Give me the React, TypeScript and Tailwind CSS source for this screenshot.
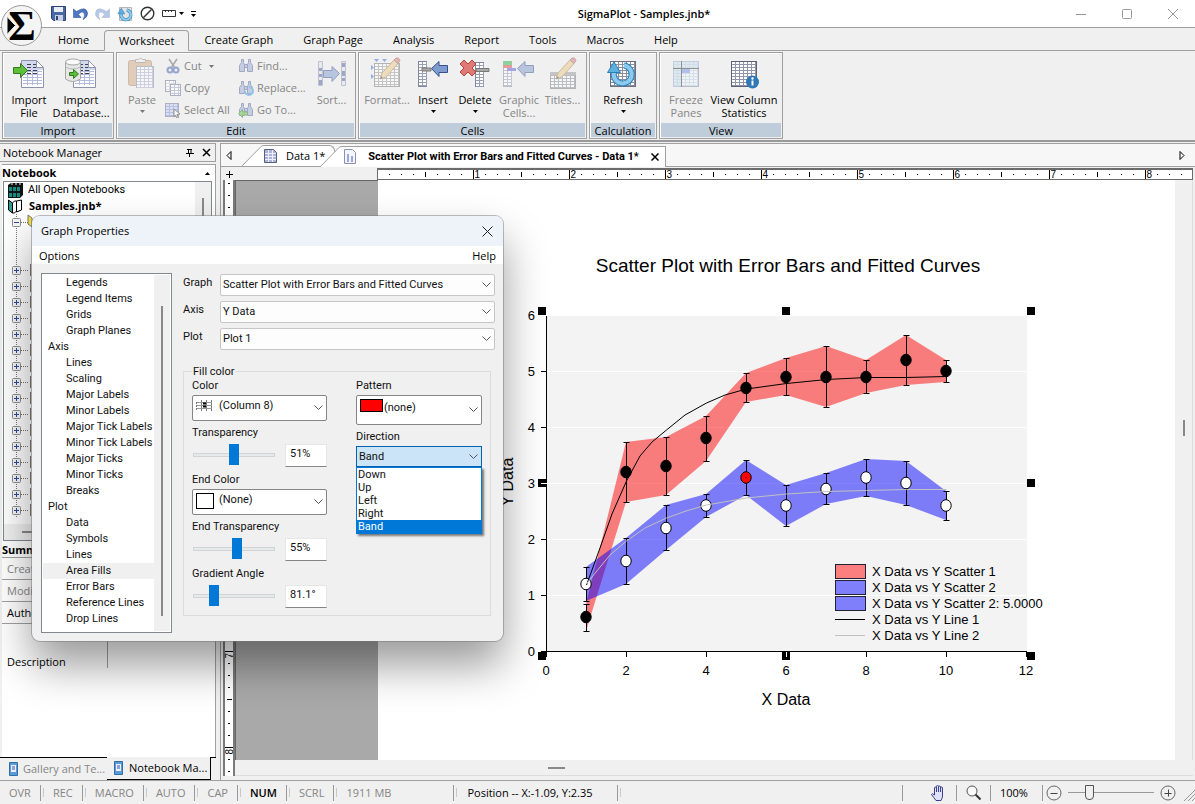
import { useState, type ReactNode } from 'react';

const UI = "font-['Open_Sans','Noto_Sans',sans-serif]";
const COMPACT = "font-['Roboto','Open_Sans',sans-serif]";

/* ---------- icons ---------- */

function Sheet({ x = 0, y = 0, w = 24, h = 26, fill = '#fff', line = '#a9b0d0', edge = '#8287a5', head = '' }) {
  const rows: number[] = [];
  const cols: number[] = [];
  for (let i = 3; i < h; i += 3) rows.push(i);
  for (let i = 4; i < w; i += 4) cols.push(i);
  return (
    <g>
      <rect x={x + 0.5} y={y + 0.5} width={w - 1} height={h - 1} fill={fill} stroke={edge} />
      {head && <rect x={x + 1} y={y + 1} width={w - 2} height={5} fill={head} />}
      {rows.map((r) => <path key={'r' + r} d={`M${x + 1} ${y + r + 0.5}h${w - 2}`} stroke={line} />)}
      {cols.map((c) => <path key={'c' + c} d={`M${x + c + 0.5} ${y + 1}v${h - 2}`} stroke={line} />)}
    </g>
  );
}

function Page() {
  return (
    <g>
      <path d="M9.500 3.500h15l7 7v20h-22z" fill="#d3d9ec" stroke="#8e93ad" />
      <path d="M10 13h21v17H10z" fill="#fff" />
      <path d="M24.500 3.500l7 7h-7z" fill="#fff" stroke="#8e93ad" />
      <path d="M11 14.500h19M11 17.500h19M11 20.500h19M11 23.500h19M11 26.500h19M15.500 13v15M20.500 13v15M25.500 13v15" stroke="#b3bbdc" />
      <path d="M15 7.500h4M21 7.500h3M15 10.500h4M21 10.500h3M15 13.500h4M21 13.500h4M15 16.500h4M21 16.500h4" stroke="#3d4258" />
    </g>
  );
}

function BlueArrow({ x = 0, y = 0, flip = false }) {
  return (
    <path
      transform={`translate(${x} ${y})${flip ? ' scale(-1 1)' : ''}`}
      d="M0.500 7.500L8 0.500v4h8.500v7H8v4z" fill="#7f9bd0" stroke="#33508f"
    />
  );
}

function Pencil() {
  return (
    <g>
      <path d="M10 22l2-6L24 3l4 3.500L16 20z" fill="#e9c987" stroke="#a58451" />
      <path d="M24 3l2-2q3-1 4 2.500L28 6.500z" fill="#d77a7a" stroke="#a35a5a" />
      <path d="M10 22l1-3 2 2z" fill="#444" />
    </g>
  );
}

function Circular({ s = 1 }) {
  return (
    <g transform={`scale(${s})`}>
      <path d="M8 14a9 9 0 1 0 10-6.500" fill="none" stroke="#2b7fb8" strokeWidth="6" />
      <path d="M8 14a9 9 0 1 0 10-6.500" fill="none" stroke="#8ccbee" strokeWidth="4" />
      <path d="M1.500 14.500L8 4l6.500 10.500z" fill="#5eaede" stroke="#2b7fb8" />
    </g>
  );
}

function Binoculars() {
  return (
    <g fill="#aab6d8" stroke="#6a7aac">
      <path d="M3.500 1.500h2v3l1 2v7h-5v-6l2-3zM10.500 1.500h2v3l2 3v6h-5v-7l1-2z" />
      <path d="M6.500 6.500h3v3h-3z" />
    </g>
  );
}

function Big({ children, dim }: { children: ReactNode; dim?: boolean }) {
  return <svg width="34" height="34" viewBox="0 0 34 34" aria-hidden="true" className={dim ? 'opacity-50' : ''}>{children}</svg>;
}

function Small({ children }: { children: ReactNode }) {
  return <svg width="16" height="16" viewBox="0 0 16 16" aria-hidden="true" className="opacity-60">{children}</svg>;
}

function Caret({ dim }: { dim?: boolean }) {
  return <svg width="5" height="3" viewBox="0 0 5 3" aria-hidden="true"><path d="M0 0h5L2.500 3z" fill={dim ? '#777' : '#000'} /></svg>;
}

function Chevron() {
  return (
    <svg width="9" height="6" viewBox="0 0 9 6" aria-hidden="true" className="pointer-events-none col-start-1 row-start-1 mr-1 self-center justify-self-end">
      <path d="M0.500 0.500l4 4 4-4" fill="none" stroke="#555" />
    </svg>
  );
}

/* ---------- ribbon ---------- */

type ToolProps = { icon: ReactNode; label: string; sub?: string; w: string; dim?: boolean; menu?: boolean };

function Tool({ icon, label, sub, w, dim, menu }: ToolProps) {
  return (
    <button type="button" className={`flex flex-col items-center pt-[3px] leading-[13px] ${w} ${dim ? 'text-[#858585]' : 'text-black'}`}>
      {icon}
      <span className="mt-[2px] whitespace-nowrap">{label}</span>
      {sub && <span className="whitespace-nowrap">{sub}</span>}
      {menu && <span className="mt-1"><Caret dim={dim} /></span>}
    </button>
  );
}

function MiniTool({ icon, label, menu }: { icon: ReactNode; label: string; menu?: boolean }) {
  return (
    <button type="button" className="flex h-[22px] items-center gap-[3px] whitespace-nowrap text-[#858585]">
      <Small>{icon}</Small>
      <span>{label}</span>
      {menu && <span className="flex pl-1"><Caret dim /></span>}
    </button>
  );
}

function Group({ title, children }: { title: string; children: ReactNode }) {
  return (
    <section className="flex flex-col border border-[#a0a0a0] bg-[#f0f0f0] p-px shadow-[inset_1px_1px_0_#fff]">
      <div className="flex h-[70px] px-[2px]">{children}</div>
      <h2 className="h-[14px] bg-[#bfcddb] text-center leading-[15px]">{title}</h2>
    </section>
  );
}

const ribbonTabs = ['Home', 'Worksheet', 'Create Graph', 'Graph Page', 'Analysis', 'Report', 'Tools', 'Macros', 'Help'];

function Ribbon() {
  return (
    <>
      <nav className="flex h-[23px] items-end border-b border-[#a0a0a0] pl-[43px]">
        {ribbonTabs.map((t) => (
          <button
            key={t}
            type="button"
            className={`h-[21px] border px-[14px] ${t === 'Worksheet' ? '-mb-px rounded-t-sm border-[#a0a0a0] border-b-[#f0f0f0] bg-[#f0f0f0]' : 'border-transparent'}`}
          >
            {t}
          </button>
        ))}
      </nav>
      <div className="flex h-[91px] gap-[2px] border-b-2 border-[#999] px-[2px] py-px">
        <Group title="Import">
          <Tool w="w-[46px]" label="Import" sub="File" icon={<Big><Page /><path d="M1.500 10.500h7v-4l7 7-7 7v-4h-7z" fill="#5cbf3a" stroke="#357a22" /></Big>} />
          <Tool w="w-[58px]" label="Import" sub="Database..." icon={
            <Big>
              <Page />
              <path d="M1.500 5v17q7 5 15 0V5z" fill="#e6e7e6" stroke="#a5a8a5" />
              <ellipse cx="9" cy="5" rx="7.500" ry="3" fill="#fafafa" stroke="#a5a8a5" />
              <path d="M1.500 10q7 4 15 0" fill="none" stroke="#b5b8b5" />
              <path d="M5.500 15.500h4v-3l5 4.500-5 4.500v-3h-4z" fill="#5cbf3a" stroke="#357a22" />
            </Big>
          } />
        </Group>
        <Group title="Edit">
          <Tool w="w-[44px]" label="Paste" dim menu icon={
            <Big dim>
              <rect x="3.500" y="3.500" width="23" height="25" rx="2" fill="#d3aa84" stroke="#a98560" />
              <path d="M10.500 5.500v-3h3l1-1h2l1 1h3v3z" fill="#eee" stroke="#888" />
              <Sheet x={11} y={9} w={18} h={22} />
            </Big>
          } />
          <div className="flex w-[73px] flex-col pt-px pl-px">
            <MiniTool label="Cut" menu icon={<><path d="M4 1l6 9M12 1l-6 9" stroke="#777" strokeWidth="1.500" /><circle cx="5" cy="12" r="2.500" fill="none" stroke="#5b74b8" strokeWidth="2" /><circle cx="11" cy="12" r="2.500" fill="none" stroke="#5b74b8" strokeWidth="2" /></>} />
            <MiniTool label="Copy" icon={<><Sheet x={0} y={0} w={11} h={12} line="#ccc" /><Sheet x={5} y={4} w={11} h={12} /></>} />
            <MiniTool label="Select All" icon={<><Sheet x={0} y={1} w={14} h={14} fill="#cdd6f3" line="#8f9fd6" /><path d="M9 7l6 5-3 .500 1.500 3-1.500.500-1.500-3-1.500 2z" fill="#fff" stroke="#555" /></>} />
          </div>
          <div className="flex w-[76px] flex-col pt-px pl-px">
            <MiniTool label="Find..." icon={<Binoculars />} />
            <MiniTool label="Replace..." icon={<><Binoculars /><path d="M7 11a4 4 0 1 0 4-4" fill="none" stroke="#56a6dd" strokeWidth="2" /></>} />
            <MiniTool label="Go To..." icon={<><Binoculars /><path d="M0.500 11.500l4-4v2.500h5v3h-5v2.500z" fill="#7cc46a" stroke="#458f36" /></>} />
          </div>
          <Tool w="w-[37px]" label="Sort..." dim icon={
            <Big dim>
              <path d="M3.500 4.500h4v24h-4zM26.500 4.500h4v24h-4z" fill="#dfe4f5" stroke="#8f94ac" />
              <path d="M4 11h3v3H4zM4 17h3v3H4zM4 23h3v5H4zM27 6h3v4h-3zM27 14h3v5h-3zM27 21h3v3h-3z" fill="#4d5f9c" />
              <BlueArrow x={25} y={9} flip />
            </Big>
          } />
          <span className="w-[2px]" />
        </Group>
        <Group title="Cells">
          <Tool w="w-[50px]" label="Format..." dim icon={
            <Big dim>
              <Sheet x={4} y={6} w={26} h={24} line="#9a9a9a" edge="#777" />
              <path d="M4 2h5L6.500 5zM12 2h5l-2.500 3zM1 8v5l3-2.500zM1 17v5l3-2.500z" fill="#3c6ad0" />
              <Pencil />
            </Big>
          } />
          <Tool w="w-[42px]" label="Insert" menu icon={
            <Big><Sheet x={2} y={4} w={9} h={26} line="#9aa0b4" /><path d="M6 11h9v3H6z" fill="#aaa" stroke="#777" /><BlueArrow x={15} y={4} /></Big>
          } />
          <Tool w="w-[42px]" label="Delete" menu icon={
            <Big>
              <Sheet x={17} y={5} w={9} h={25} line="#9aa0b4" />
              <path d="M18 11.500h13v3H18z" fill="#aaa" stroke="#777" />
              <path d="M2 7l4-4 4 4 4-4 4 4-4 4 4 4-4 4-4-4-4 4-4-4 4-4z" fill="#e07a74" stroke="#b5413c" />
            </Big>
          } />
          <Tool w="w-[46px]" label="Graphic" sub="Cells..." dim icon={
            <Big dim>
              <Sheet x={1} y={4} w={9} h={26} line="#9aa0b4" />
              <path d="M1 4h9v4H1z" fill="#31b44a" /><path d="M1 8h9v3H1z" fill="#e04a4a" /><path d="M5 11h9v3H5z" fill="#5a5ae0" />
              <BlueArrow x={15} y={4} />
            </Big>
          } />
          <Tool w="w-[41px]" label="Titles..." dim icon={
            <Big dim><Sheet x={4} y={15} w={26} h={17} line="#8a8a9a" edge="#777" /><path d="M4 15h26v3H4z" fill="#999" /><Pencil /></Big>
          } />
        </Group>
        <Group title="Calculation">
          <Tool w="w-[60px]" label="Refresh" menu icon={<Big><Sheet x={4} y={4} w={26} h={26} line="#8a8fa0" edge="#6b7083" /><g transform="translate(0 1)"><Circular /></g></Big>} />
        </Group>
        <Group title="View">
          <Tool w="w-[46px]" label="Freeze" sub="Panes" dim icon={
            <Big dim>
              <Sheet x={4} y={4} w={26} h={26} fill="#f3f8fd" line="#b9cfe2" />
              <path d="M4 4h26v6H4zM4 4h8v26H4z" fill="#a9cbe8" opacity=".5" />
              <path d="M12.500 4v26M4 11.500h26" stroke="#333" /><path d="M13 12h8v4h-8z" fill="#6f8ff0" />
            </Big>
          } />
          <Tool w="w-[70px]" label="View Column" sub="Statistics" icon={
            <Big>
              <Sheet x={4} y={4} w={26} h={26} line="#9095aa" edge="#5d6275" />
              <circle cx="25.500" cy="25" r="6.500" fill="#2f77b5" />
              <circle cx="25.500" cy="21.500" r="1.200" fill="#fff" /><path d="M25.500 23.500v5" stroke="#fff" strokeWidth="2" />
            </Big>
          } />
        </Group>
      </div>
    </>
  );
}

function TitleBar() {
  return (
    <header className="relative flex h-7 shrink-0 items-center border-b border-[#a0a0a0] bg-white pl-[51px]">
      <button type="button" aria-label="Application menu" className="absolute top-1 left-0 z-10">
        <svg width="44" height="44" viewBox="0 0 44 44" aria-hidden="true" className="overflow-visible">
          <circle cx="21.500" cy="21.500" r="20" fill="#f4f4f4" stroke="#999" />
          <text x="22" y="36" textAnchor="middle" fontFamily="Liberation Serif, serif" fontWeight="700" fontSize="42">Σ</text>
          <path d="M7 12.500v18l8.500-9z" stroke="#f4f4f4" />
        </svg>
      </button>
      <div className="flex items-center gap-[7px]">
        <button type="button" aria-label="Save">
          <svg width="15" height="15" viewBox="0 0 15 15"><path d="M.500 .500h14v14h-12l-2-2z" fill="#4a67a6" stroke="#2f4373" /><path d="M3 1h9v5H3z" fill="#e9edf5" /><path d="M4 9h8v6H4z" fill="#c9d1e2" /><path d="M5 10h2v4H5z" fill="#2f4373" /></svg>
        </button>
        <button type="button" aria-label="Undo">
          <svg width="15" height="15" viewBox="0 0 15 15"><path d="M.500 3v8.500H8L5.500 8.500Q9 4.500 11 7q1.500 3-1 6.500 5-2.500 4.500-6.500Q13-.500 3.500 5.500z" fill="#4c78c4" stroke="#2f5597" strokeWidth=".6" /></svg>
        </button>
        <button type="button" aria-label="Redo" className="opacity-40">
          <svg width="15" height="15" viewBox="0 0 15 15"><path transform="translate(15 0) scale(-1 1)" d="M.500 3v8.500H8L5.500 8.500Q9 4.500 11 7q1.500 3-1 6.500 5-2.500 4.500-6.500Q13-.500 3.500 5.500z" fill="#4c78c4" stroke="#2f5597" strokeWidth=".6" /></svg>
        </button>
        <button type="button" aria-label="Refresh">
          <svg width="16" height="16" viewBox="0 0 16 16"><path d="M2.500 1.500h12v13h-12z" fill="#e4e4e4" stroke="#b5b5b5" /><Circular s={0.54} /></svg>
        </button>
        <button type="button" aria-label="Stop">
          <svg width="15" height="15" viewBox="0 0 15 15"><circle cx="7.500" cy="7.500" r="6.300" fill="none" stroke="#333" strokeWidth="1.400" /><path d="M3.500 11.500l8-8" stroke="#333" strokeWidth="1.400" /></svg>
        </button>
        <button type="button" aria-label="Ruler units" className="flex items-center gap-[3px]">
          <svg width="14" height="7" viewBox="0 0 14 7"><path d="M.500 .500h13v6H.500zM3.500 0v2M6.500 0v2M9.500 0v2" fill="none" stroke="#333" /></svg>
          <Caret />
        </button>
        <button type="button" aria-label="Customize">
          <svg width="5" height="6" viewBox="0 0 5 6"><path d="M0 .500h5" stroke="#000" /><path d="M0 3h5L2.500 6z" /></svg>
        </button>
      </div>
      <h1 className="flex-1 pl-4 text-center font-semibold">SigmaPlot - Samples.jnb*</h1>
      <div className="flex gap-9 pr-[17px]">
        <button type="button" aria-label="Minimize"><svg width="10" height="10"><path d="M0 5.500h10" stroke="#999" /></svg></button>
        <button type="button" aria-label="Maximize"><svg width="10" height="10"><rect x=".500" y=".500" width="9" height="9" rx="1" fill="none" stroke="#999" /></svg></button>
        <button type="button" aria-label="Close"><svg width="10" height="10"><path d="M0 0l10 10M10 0L0 10" stroke="#999" /></svg></button>
      </div>
    </header>
  );
}

/* ---------- notebook panel ---------- */

function Node({ open }: { open?: boolean }) {
  return (
    <svg width="32" height="16" viewBox="0 0 32 16" aria-hidden="true" className="block">
      <path d="M11.500 0v16M16 8.500h8" stroke="#777" strokeDasharray="1 1" />
      <rect x="7.500" y="4.500" width="8" height="8" rx="1" fill="#f7f7f7" stroke="#8f8f8f" />
      <path d={open ? 'M9 8.500h5' : 'M9 8.500h5M11.500 6v5'} stroke="#2a4aa0" />
      <path d={open ? 'M23 1l4 3v9l-4-3z' : 'M25.500 2v12'} fill="#f0e040" stroke="#777" />
    </svg>
  );
}

const closedNodes = Array.from({ length: 16 }, (_, i) => i);

function NotebookPanel() {
  return (
    <aside className="flex w-[216px] shrink-0 flex-col">
      <div className="flex h-[19px] items-center border border-l-0 border-[#a0a0a0] pr-1 pl-[3px]">
        <h2 className="flex-1">Notebook Manager</h2>
        <button type="button" aria-label="Pin" className="mr-2"><svg width="8" height="8" viewBox="0 0 8 8"><path d="M2.500 0v4.500M1 .500h5M5 0v5M0 4.500h8M3.500 5v3" stroke="#000" fill="none" /></svg></button>
        <button type="button" aria-label="Close panel"><svg width="9" height="9" viewBox="0 0 9 9"><path d="M1 1l7 7M8 1L1 8" stroke="#000" strokeWidth="1.500" /></svg></button>
      </div>
      <div className="mt-[2px] ml-[2px] flex min-h-0 flex-1 flex-col border border-b-0 border-l-0 border-[#a0a0a0] bg-white">
        <div className="flex h-4 items-center justify-between pr-[5px] font-bold">
          Notebook
          <svg width="5" height="3"><path d="M0 3h5L2.500 0z" /></svg>
        </div>
        <div className="mr-[3px] ml-px flex h-[360px] shrink-0 flex-col border border-[#828790]">
          <div className="flex min-h-0 flex-1">
            <ul className="flex-1">
              <li className="flex h-4 items-center gap-[5px] pl-1">
                <svg width="15" height="15" viewBox="0 0 15 15"><path d="M0 2l3-2h12v12l-3 3H0z" fill="#111" /><path d="M1 4h3v4H1zM5 4h3v4H5zM9 4h3v4H9zM1 10h3v4H1zM5 10h3v4H5zM9 10h3v4H9z" fill="#138a80" /><path d="M3 1h2M7 1h2M11 1h2" stroke="#eee" /></svg>
                <span className={COMPACT}>All Open Notebooks</span>
              </li>
              <li className="flex h-4 items-center gap-[6px] pl-1 font-bold">
                <svg width="15" height="15" viewBox="0 0 15 15"><path d="M.500 1l4 3v10l-4-3z" fill="#2a9d94" stroke="#000" /><path d="M4.500 4l2-2h2v10l-2 2h-2z" fill="#fff" stroke="#000" /><path d="M8.500 2l5-1v10l-5 2z" fill="#fff" stroke="#000" /></svg>
                <span>Samples.jnb*</span>
              </li>
              <li className="h-12 pl-px"><Node open /><svg width="32" height="32" className="block"><path d="M11.500 0v32" stroke="#777" strokeDasharray="1 1" /></svg></li>
              {closedNodes.map((n) => <li key={n} className="h-4 pl-px"><Node /></li>)}
            </ul>
            <div className="w-4 bg-[#f0f0f0] pt-4"><div className="mx-auto h-72 w-[2px] bg-[#888]" /></div>
          </div>
          <div className="flex h-4 shrink-0 items-center bg-[#f0f0f0] pl-[18px]"><div className="h-[2px] w-24 bg-[#888]" /></div>
        </div>
        <div className="mt-[2px] flex h-[15px] items-center border-b border-[#a0a0a0] font-bold">Summary</div>
        <dl>
          <div className="flex h-[22px] items-center border-b border-[#a0a0a0] pl-[5px] text-[#858585]"><dt>Created</dt></div>
          <div className="flex h-[22px] items-center border-b border-[#a0a0a0] pl-[5px] text-[#858585]"><dt>Modified</dt></div>
          <div className="flex h-[22px] items-center border-b border-[#a0a0a0] pl-[5px]"><dt>Author</dt></div>
          <div className="flex h-11 items-end pl-[5px]"><dt className="w-[100px] leading-3">Description</dt><dd className="h-11 border-l border-[#a0a0a0]" /></div>
        </dl>
      </div>
      <div className="flex h-[23px] items-start border-t border-black whitespace-nowrap">
        <button type="button" className="flex h-[22px] w-[107px] items-center gap-[5px] pl-[9px] text-[#858585]">
          <BookIcon />Gallery and Te...
        </button>
        <button type="button" className="-mt-px flex h-[23px] items-center gap-[6px] border border-t-0 border-l-0 border-black bg-[#f0f0f0] pr-[3px] pl-[7px]">
          <BookIcon />Notebook Ma...
        </button>
      </div>
    </aside>
  );
}

function BookIcon() {
  return <svg width="9" height="14" viewBox="0 0 9 14" aria-hidden="true" className="shrink-0"><path d="M.500 .500h8v13h-8z" fill="#5b9bd5" stroke="#2f6fa8" /><path d="M2 3h5v7H2z" fill="#eef" /><path d="M3 5h3M3 7h3" stroke="#35a" /></svg>;
}

/* ---------- rulers ---------- */

const ticks = Array.from({ length: 68 }, (_, i) => i);

function TopRuler() {
  return (
    <div className="ml-[142px] h-3 flex-1 overflow-hidden border border-t-2 border-[#6b6b6b] bg-white">
      <svg width="100%" height="9" className="block" fontFamily="Liberation Sans, sans-serif" fontSize="10">
        {ticks.map((t) => {
          const x = t * 12 - 0.5;
          if (t % 8 === 0) return t === 0 ? null : <g key={t}><path d={`M${x} 0v9`} stroke="#000" /><text x={x + 1} y="8">{t / 8}</text></g>;
          return <path key={t} d={t % 4 === 0 ? `M${x} 2v5` : `M${x} 4v1`} stroke="#000" />;
        })}
      </svg>
    </div>
  );
}

function SideRuler() {
  return (
    <div className="w-3 shrink-0 overflow-hidden border-x-2 border-[#7a7a7a] bg-white">
      <svg width="9" height="600" className="block" fontFamily="Liberation Sans, sans-serif" fontSize="10">
        {ticks.slice(0, 50).map((t) => {
          const y = t * 12 + 3.5;
          const at = t + 17;
          if (at % 8 === 0) return <g key={t}><path d={`M0 ${y}h9`} stroke="#000" /><text transform={`translate(8 ${y + 7}) rotate(-90)`}>{at / 8}</text></g>;
          return <path key={t} d={at % 4 === 0 ? `M2 ${y}h5` : `M3 ${y}h2`} stroke="#000" />;
        })}
      </svg>
    </div>
  );
}

/* ---------- chart ---------- */

// [centre, top cap, bottom cap] for x = 1..10
const series1 = [
  [617, 604, 631], [472, 442, 502], [466, 437, 495], [438, 416, 461], [388, 373, 402],
  [377, 358, 395], [377, 346, 407], [377, 360, 393], [360, 335, 385], [371, 360, 382],
];
const series2 = [
  [584, 567, 601], [561, 538, 584], [528, 505, 550], [505.5, 494, 517], [477.5, 460, 495],
  [505.5, 485, 526], [489, 473, 504], [477.5, 459, 496], [483, 461, 505], [505.5, 491, 520],
];
const px = (i: number) => 586 + i * 40;

function band(s: number[][]) {
  const up = s.map((p, i) => `${px(i)},${p[1]}`);
  const down = s.map((p, i) => `${px(i)},${p[2]}`).reverse();
  return [...up, ...down].join(' ');
}

function Points({ data, fill }: { data: number[][]; fill: string }) {
  return (
    <g stroke="#000">
      {data.map(([c, t, b], i) => {
        const x = px(i) + 0.5;
        const hot = fill === '#fff' && i === 4;
        return (
          <g key={i}>
            <path d={`M${x} ${t}v${b - t}M${x - 3} ${t + 0.5}h6M${x - 3} ${b + 0.5}h6`} />
            <ellipse cx={px(i)} cy={c} rx="5.200" ry="5.800" fill={hot ? '#f00' : fill} />
            {hot && <path d={`M${x - 1} ${c}h1`} />}
          </g>
        );
      })}
    </g>
  );
}

const legend = [
  { label: 'X Data vs Y Scatter 1', y: 571, fill: '#fb7f7f' },
  { label: 'X Data vs Y Scatter 2', y: 587, fill: '#7f7ffb' },
  { label: 'X Data vs Y Scatter 2: 5.0000', y: 603, fill: '#7f7ffb' },
  { label: 'X Data vs Y Line 1', y: 619, line: '#000' },
  { label: 'X Data vs Y Line 2', y: 635, line: '#c0c0c0' },
];

const handles = [[538, 307], [782, 307], [1027, 307], [538, 479], [1027, 479], [538, 652], [782, 652], [1027, 652]];

function Chart() {
  return (
    <svg width="797" height="579" viewBox="378 180 797 579" className="block shrink-0" fontFamily="Liberation Sans, Arial, sans-serif" fontSize="13">
      <rect x="547" y="316" width="480" height="335" fill="#f3f3f3" />
      {[371, 427, 483, 539, 595].map((y) => <path key={y} d={`M547 ${y + 0.5}h479`} stroke="#fff" />)}
      <text x="788" y="272" textAnchor="middle" fontSize="19">Scatter Plot with Error Bars and Fitted Curves</text>
      {handles.map(([x, y]) => <rect key={x + '-' + y} x={x} y={y} width="8" height="8" />)}
      <polygon points={band(series1)} fill="#f00" opacity=".49" />
      <polygon points={band(series2)} fill="#00f" opacity=".49" />
      <Points data={series1} fill="#000" />
      <Points data={series2} fill="#fff" />
      <path d="M586.500 585L592 570 600 548 612 514 626.500 481 640 456 652 442 666.500 430 685 415 706.500 403 725 395 746.500 389 786.500 383.500 826.500 379.500 866.500 377.500 906 377.500 946.500 376.500" fill="none" stroke="#000" />
      <path d="M586.500 584L596 572 610 555 626.500 541 645 528 666.500 518 686 511 706.500 505 746.500 498 786.500 494 826.500 491.500 866.500 490.500 906.500 489.500 946.500 489.500" fill="none" stroke="#c0c0c0" />
      <path d="M546.500 316v336M541 651.500h486" stroke="#000" />
      {[6, 5, 4, 3, 2, 1, 0].map((v) => (
        <g key={v}>
          {v < 6 && <path d={`M541 ${651.5 - v * 56}h6`} stroke={v === 3 ? '#fff' : '#000'} />}
          <text x="535" y={656 - v * 56} textAnchor="end">{v}</text>
        </g>
      ))}
      {[0, 2, 4, 6, 8, 10, 12].map((v) => (
        <g key={v}>
          <path d={`M${546.5 + v * 40} 652v5`} stroke={v === 6 ? '#fff' : '#000'} />
          <text x={546 + v * 40} y="675" textAnchor="middle">{v}</text>
        </g>
      ))}
      <text x="786" y="705" textAnchor="middle" fontSize="16">X Data</text>
      <text transform="translate(513 482) rotate(-90)" textAnchor="middle" fontSize="16">Y Data</text>
      {legend.map((l) => (
        <g key={l.label}>
          {l.fill && <rect x="835.500" y={l.y - 6.5} width="30" height="14" fill={l.fill} stroke="#223" />}
          {l.line && <path d={`M835 ${l.y + 0.5}h30`} stroke={l.line} />}
          <text x="872" y={l.y + 5}>{l.label}</text>
        </g>
      ))}
    </svg>
  );
}

function Slope() {
  return <svg width="22" height="21" viewBox="0 0 22 21" aria-hidden="true" className="block shrink-0"><path d="M0 21L19 1.500Q20 .500 22 .500V21z" fill="#fff" /><path d="M0 21L19 1.500Q20 .500 22 .500" fill="none" stroke="#a0a0a0" /></svg>;
}

function Workspace() {
  return (
    <main className="ml-1 flex min-w-0 flex-1 flex-col border-t border-l border-[#a0a0a0]">
      <div className="flex h-[23px] shrink-0 items-end border-b border-[#a0a0a0] bg-[#f7f7f7] pr-[10px]">
        <button type="button" aria-label="Scroll tabs left" className="mr-[10px] self-center pl-[5px]"><svg width="6" height="9" viewBox="0 0 6 9"><path d="M5 .500v8l-4-4z" fill="none" stroke="#000" /></svg></button>
        <button type="button" className="flex items-end">
          <Slope />
          <span className="flex h-[21px] items-center gap-[9px] rounded-tr-md border-t border-r border-[#a0a0a0] bg-white pr-[9px] pb-px">
            <svg width="13" height="14" viewBox="0 0 13 14"><path d="M.500 .500h9l3 3v10h-12z" fill="#aab4d8" stroke="#555d80" /><path d="M1 4.500h11M1 7.500h11M1 10.500h11M4.500 1v12M8.500 1v12" stroke="#eef" /></svg>
            Data 1*
          </span>
        </button>
        <div className={`z-10 -mb-px -ml-[15px] flex items-end font-bold ${COMPACT}`}>
          <Slope />
          <div className="flex h-[21px] items-center border-t border-r border-[#a0a0a0] bg-white pr-[6px] pb-px">
            <button type="button" className="flex items-center gap-3 pl-[2px]">
              <svg width="12" height="15" viewBox="0 0 12 15"><path d="M.500 .500h8l3 3v11H.500z" fill="#f3f5fc" stroke="#8a90ae" /><path d="M3 5h2v8H3zM7 7h2v6H7z" fill="#9aa8dc" /></svg>
              Scatter Plot with Error Bars and Fitted Curves - Data 1*
            </button>
            <button type="button" aria-label="Close tab" className="pl-3"><svg width="8" height="8" viewBox="0 0 8 8"><path d="M.500 .500l7 7M7.500 .500l-7 7" stroke="#000" strokeWidth="1.500" /></svg></button>
          </div>
        </div>
        <button type="button" aria-label="Scroll tabs right" className="ml-auto self-center"><svg width="6" height="9" viewBox="0 0 6 9"><path d="M1 .500v8l4-4z" fill="none" stroke="#000" /></svg></button>
      </div>
      <div className="flex h-[13px] shrink-0 items-end pr-[2px] pl-[2px]">
        <div className="flex h-3 w-3 items-center justify-center"><svg width="7" height="7"><path d="M0 3.500h7M3.500 0v7" stroke="#000" /></svg></div>
        <TopRuler />
      </div>
      <div className="flex min-h-0 flex-1 pb-1 pl-[2px]">
        <SideRuler />
        <div className="flex min-w-0 flex-1 flex-col">
          <div className="flex min-h-0 flex-1">
            <div className="flex min-w-0 flex-1 overflow-hidden bg-white">
              <div className="w-[143px] shrink-0 border-t border-l border-[#666] bg-[#a9a9a9]" />
              <Chart />
            </div>
            <div className="flex w-[18px] items-center justify-center border-r border-[#ddd] pb-[84px]"><div className="h-4 w-[2px] bg-[#888]" /></div>
          </div>
          <div className="flex h-4 shrink-0 items-center border-b border-[#ddd] pl-[313px]"><div className="h-[2px] w-[17px] bg-[#888]" /></div>
        </div>
        <div className="w-[2px]" />
      </div>
    </main>
  );
}

/* ---------- dialog ---------- */

const pages = [
  'Legends', 'Legend Items', 'Grids', 'Graph Planes', '#Axis', 'Lines', 'Scaling', 'Major Labels', 'Minor Labels',
  'Major Tick Labels', 'Minor Tick Labels', 'Major Ticks', 'Minor Ticks', 'Breaks', '#Plot', 'Data', 'Symbols', 'Lines',
  'Area Fills', 'Error Bars', 'Reference Lines', 'Drop Lines',
];

type PickProps = { id: string; label: string; value: string };

function TopPick({ id, label, value }: PickProps) {
  return (
    <div className="flex h-[22px]">
      <label htmlFor={id} className="w-[37px] pt-[2px]">{label}</label>
      <div className="grid flex-1">
        <select id={id} className="col-start-1 row-start-1 appearance-none rounded-xs border border-[#c6c6c6] bg-[#fdfdfd] px-[2px]"><option>{value}</option></select>
        <Chevron />
      </div>
    </div>
  );
}

function ColorPick({ id, label, value, swatch, tall }: PickProps & { swatch: ReactNode; tall?: boolean }) {
  return (
    <div className="flex flex-col gap-px">
      <label htmlFor={id} className="h-4 leading-4">{label}</label>
      <div className={`grid ${tall ? 'h-[30px]' : 'h-[26px]'}`}>
        <select id={id} className={`col-start-1 row-start-1 appearance-none rounded-xs border border-[#858585] bg-white pb-1 ${tall ? 'pl-[27px]' : 'pl-[26px]'}`}><option>{value}</option></select>
        <span className="pointer-events-none col-start-1 row-start-1 flex items-start pt-1 pl-[4px]">{swatch}</span>
        <Chevron />
      </div>
    </div>
  );
}

function Amount({ id, label, start, max, text }: { id: string; label: string; start: number; max: number; text: string }) {
  const [value, setValue] = useState(start);
  return (
    <div className="flex flex-col gap-px">
      <label htmlFor={id} className="h-4 leading-4">{label}</label>
      <div className="flex h-[26px] items-center gap-[10px]">
        <input
          id={id}
          type="range"
          max={max}
          value={value}
          onChange={(e) => setValue(Number(e.target.value))}
          className="ml-px h-[21px] w-[82px] appearance-none bg-transparent [&::-webkit-slider-runnable-track]:h-1 [&::-webkit-slider-runnable-track]:border [&::-webkit-slider-runnable-track]:border-[#d0d4d4] [&::-webkit-slider-runnable-track]:bg-[#e6eaea] [&::-webkit-slider-thumb]:-mt-[10px] [&::-webkit-slider-thumb]:h-[21px] [&::-webkit-slider-thumb]:w-[10px] [&::-webkit-slider-thumb]:appearance-none [&::-webkit-slider-thumb]:bg-[#0078d7]"
        />
        <input type="text" aria-label={label + ' value'} defaultValue={text} className="h-[23px] w-[42px] border border-[#e6e6e6] border-b-[#858585] bg-white pb-[3px] pl-1" />
      </div>
    </div>
  );
}

const directions = ['Down', 'Up', 'Left', 'Right', 'Band'];

function Dialog() {
  const [direction, setDirection] = useState('Band');
  return (
    <div role="dialog" aria-label="Graph Properties" className="absolute top-[216px] left-[32px] z-20 w-[471px] overflow-hidden rounded-lg bg-[#f0f0f0] shadow-[0_0_0_1px_rgba(120,120,120,0.5),0_24px_44px_rgba(0,0,0,0.4)]">
      <div className="flex h-[30px] items-center justify-between bg-[#eef3fa] pr-[10px] pl-[9px]">
        <h2>Graph Properties</h2>
        <button type="button" aria-label="Close dialog"><svg width="11" height="11"><path d="M.500 .500l10 10M10.500 .500l-10 10" stroke="#222" /></svg></button>
      </div>
      <div className="flex h-[18px] items-center justify-between bg-white pt-px pr-[7px] pl-[7px]">
        <button type="button">Options</button>
        <button type="button">Help</button>
      </div>
      <div className={`flex gap-[11px] pt-[9px] pr-2 pb-2 pl-[9px] text-[#111] ${COMPACT}`}>
        <div className="flex w-[131px] border border-[#828790] bg-white p-px">
          <ul className="flex-1 pb-1">
            {pages.map((p, i) => (
              <li key={i} className={`h-4 leading-4 whitespace-nowrap ${p[0] === '#' ? 'pl-[5px]' : 'pl-[23px]'} ${p === 'Area Fills' ? 'bg-[#f0f0f0]' : ''}`}>{p.replace('#', '')}</li>
            ))}
          </ul>
          <div className="w-4 bg-[#f0f0f0] pt-[31px]"><div className="mx-auto h-[310px] w-[2px] bg-[#888]" /></div>
        </div>
        <form className="flex-1 pt-px">
          <div className="flex flex-col gap-[5px]">
            <TopPick id="graph" label="Graph" value="Scatter Plot with Error Bars and Fitted Curves" />
            <TopPick id="axis" label="Axis" value="Y Data" />
            <TopPick id="plot" label="Plot" value="Plot 1" />
          </div>
          <fieldset className="mt-[14px] mr-1 flex justify-between border border-[#dcdcdc] px-2 pb-[6px]">
            <legend className="h-[14px] px-px leading-4">Fill color</legend>
            <div className="flex w-[135px] flex-col gap-1">
              <ColorPick id="color" label="Color" value="(Column 8)" swatch={
                <svg width="16" height="13" viewBox="0 0 16 13"><path d="M0 3.500h16M0 6.500h16M0 9.500h16" stroke="#999" /><path d="M.500 3v8M5.500 1v11M10.500 1v11M15.500 1v11" stroke="#777" strokeDasharray="2 1" /><path d="M7 4.500h3M7 7.500h3" stroke="#000" strokeWidth="2" /></svg>
              } />
              <Amount id="transparency" label="Transparency" start={50} max={100} text="51%" />
              <ColorPick id="endColor" label="End Color" value="(None)" swatch={<span className="h-4 w-[18px] border border-black bg-white" />} />
              <Amount id="endTransparency" label="End Transparency" start={54} max={100} text="55%" />
              <Amount id="angle" label="Gradient Angle" start={76} max={360} text="81.1°" />
            </div>
            <div className="flex w-[126px] flex-col gap-1">
              <ColorPick id="pattern" label="Pattern" value="(none)" tall swatch={<span className="h-[13px] w-[23px] border border-black bg-[#f00]" />} />
              <div className="relative flex flex-col gap-px">
                <label htmlFor="direction" className="h-4 leading-4">Direction</label>
                <div className="grid h-[21px]">
                  <select id="direction" value={direction} onChange={(e) => setDirection(e.target.value)} className="col-start-1 row-start-1 appearance-none border border-[#0063b1] bg-[#cce4f7] px-[2px]">
                    {directions.map((d) => <option key={d}>{d}</option>)}
                  </select>
                  <Chevron />
                </div>
                <ul role="listbox" aria-label="Direction" className="absolute top-[38px] left-0 w-full border border-[#0078d7] bg-white shadow-[2px_2px_2px_rgba(0,0,0,0.5)]">
                  {directions.map((d) => (
                    <li key={d} role="option" aria-selected={d === direction} onClick={() => setDirection(d)} className={`h-[13px] px-px leading-[13px] ${d === direction ? 'bg-[#0078d7] text-white' : ''}`}>{d}</li>
                  ))}
                </ul>
              </div>
            </div>
          </fieldset>
        </form>
      </div>
    </div>
  );
}

/* ---------- status bar ---------- */

function Sep() {
  return <span className="flex h-4 w-1 shrink-0 items-center justify-between border-l border-[#999]"><span className="ml-auto h-[9px] w-px bg-[#c8c8c8]" /></span>;
}

function Bar() {
  return <span className="h-4 w-px bg-[#999]" />;
}

const flags = ['OVR', 'REC', 'MACRO', 'AUTO', 'CAP', 'NUM', 'SCRL'];

function StatusBar() {
  return (
    <footer className="flex h-6 shrink-0 items-center border-t border-[#a0a0a0] text-[#858585]">
      {flags.map((f) => (
        <span key={f} className="flex items-center">
          <span className={`px-[9px] ${f === 'NUM' ? 'font-semibold text-black' : ''}`}>{f}</span><Sep />
        </span>
      ))}
      <span className="w-[116px] pl-[9px]">1911 MB</span><Sep />
      <span className="w-[160px] pl-[10px] font-medium text-black">Position -- X:-1.09, Y:2.35</span><Sep />
      <div className="ml-auto flex items-center text-black">
        <Bar />
        <button type="button" aria-label="Pan" className="pr-[11px] pl-7">
          <svg width="14" height="16" viewBox="0 0 14 16"><path d="M3.500 10V3q0-1 1-1t1 1v4V1.500q0-1 1-1t1 1V7 2q0-1 1-1t1 1v5-4q0-1 1-1t1 1v8q0 2-1.500 4.500h-5Q3 13 .500 9.500q.500-2 3 .500z" fill="#dfe2f8" stroke="#3b3f8f" /></svg>
        </button>
        <Bar />
        <button type="button" aria-label="Zoom tool" className="px-[9px]">
          <svg width="15" height="15" viewBox="0 0 15 15"><circle cx="6" cy="6" r="5" fill="#fafafa" stroke="#555" /><path d="M9.500 9.500l5 5" stroke="#333" strokeWidth="2" /></svg>
        </button>
        <Bar />
        <span className="w-[51px] pl-[9px]">100%</span>
        <Bar />
        <button type="button" aria-label="Zoom out" className="pl-[3px]"><svg width="16" height="16" viewBox="0 0 16 16"><circle cx="8" cy="8" r="7" fill="none" stroke="#666" /><path d="M4.500 8.500h7" stroke="#444" /></svg></button>
        <input
          type="range"
          aria-label="Zoom"
          defaultValue={22}
          className="mx-[6px] h-4 w-[86px] appearance-none bg-transparent [&::-webkit-slider-runnable-track]:h-px [&::-webkit-slider-runnable-track]:bg-[#999] [&::-webkit-slider-thumb]:-mt-[7px] [&::-webkit-slider-thumb]:h-[15px] [&::-webkit-slider-thumb]:w-[9px] [&::-webkit-slider-thumb]:appearance-none [&::-webkit-slider-thumb]:rounded-b-sm [&::-webkit-slider-thumb]:border [&::-webkit-slider-thumb]:border-[#555] [&::-webkit-slider-thumb]:bg-[#f0f0f0]"
        />
        <button type="button" aria-label="Zoom in"><svg width="16" height="16" viewBox="0 0 16 16"><circle cx="8" cy="8" r="7" fill="none" stroke="#666" /><path d="M4.500 8.500h7M8.500 4.500v7" stroke="#444" /></svg></button>
        <svg width="11" height="11" viewBox="0 0 11 11" className="ml-2 self-end"><path d="M0 11L11 0M4 11l7-7M8 11l3-3" stroke="#999" /></svg>
      </div>
    </footer>
  );
}

export default function App() {
  return (
    <div className={`relative flex h-screen flex-col overflow-hidden bg-[#f0f0f0] text-[11px] leading-[14px] text-black ${UI}`}>
      <TitleBar />
      <Ribbon />
      <div className="mt-px flex min-h-0 flex-1">
        <NotebookPanel />
        <Workspace />
      </div>
      <Dialog />
      <StatusBar />
    </div>
  );
}
